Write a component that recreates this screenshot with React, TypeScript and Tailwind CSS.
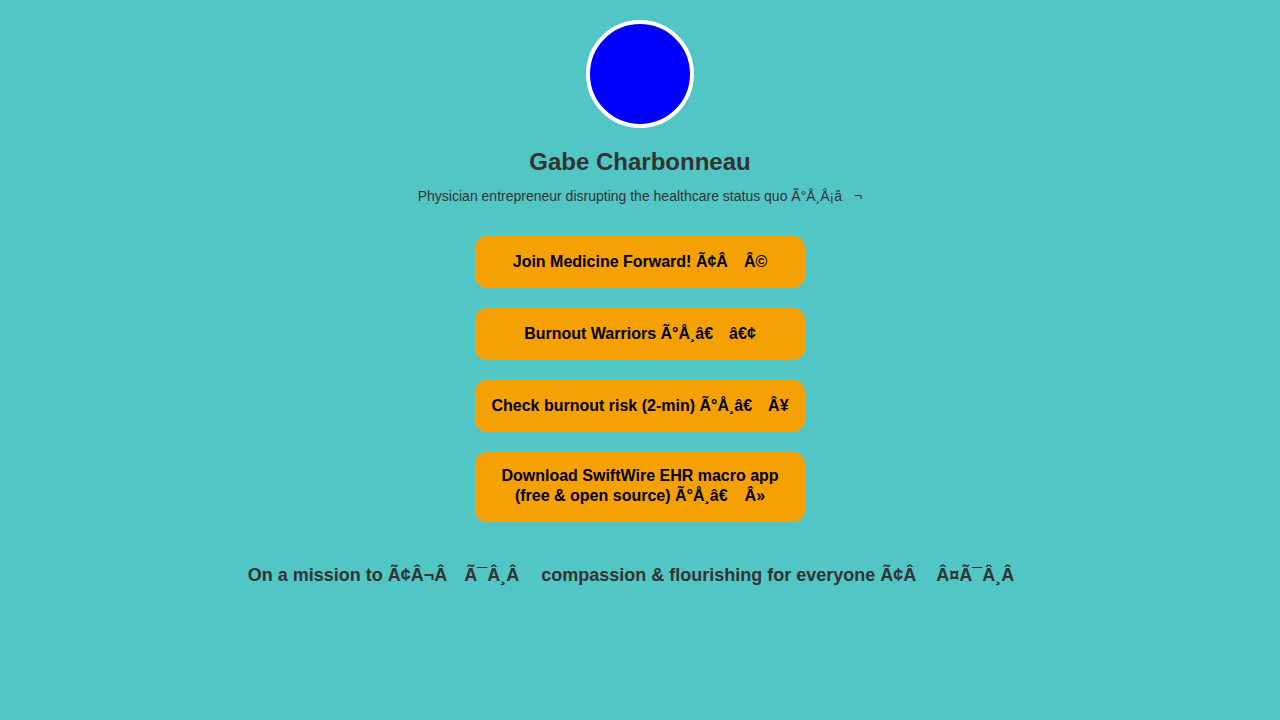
import React from "react";

const G = ({ w }: { w: string }) => <span className={`inline-block ${w}`} />;

const Btn = ({ children, py = "py-[16px]" }: { children: React.ReactNode; py?: string }) => (
  <a
    className={`flex w-[330px] flex-col items-center justify-center rounded-[12px] bg-[#f5a106] px-[8px] ${py} text-center text-[16px] font-bold leading-[20px] text-black whitespace-nowrap`}
  >
    {children}
  </a>
);

export default function App() {
  return (
    <div
      className="flex min-h-[720px] w-full flex-col items-center bg-[#52c6c5] pt-[20px] text-[#333333]"
      style={{ fontFamily: '"Liberation Sans", Arial, sans-serif' }}
    >
      <div className="h-[108px] w-[108px] rounded-full border-4 border-white bg-[#0000ff]" />
      <h1 className="mt-[20px] text-[24px] font-bold leading-[28px]">Gabe Charbonneau</h1>
      <p className="mt-[12px] text-[14px] leading-[16px] whitespace-nowrap">
        Physician entrepreneur disrupting the healthcare status quo Ã°Å¸Å¡â<G w="w-[12px]" />¬
      </p>
      <div className="mt-[32px] flex flex-col items-center gap-[20px]">
        <Btn>
          <span>Join Medicine Forward! Ã¢Â<G w="w-[16px]" />Â©</span>
        </Btn>
        <Btn>
          <span>Burnout Warriors Ã°Å¸â€<G w="w-[16px]" />â€¢</span>
        </Btn>
        <Btn>
          <span>Check burnout risk (2-min) Ã°Å¸â€<G w="w-[16px]" />Â¥</span>
        </Btn>
        <Btn py="pt-[14px] pb-[16px]">
          <span>Download SwiftWire EHR macro app</span>
          <span>(free &amp; open source) Ã°Å¸â€<G w="w-[17px]" />Â»</span>
        </Btn>
      </div>
      <p className="mt-[42px] text-[18px] font-bold leading-[22px] whitespace-nowrap">
        On a mission to Ã¢Â¬Â<G w="w-[17px]" />Ã¯Â¸Â<G w="w-[22px]" />compassion &amp; flourishing for everyone Ã¢Â<G w="w-[20px]" />Â¤Ã¯Â¸Â<G w="w-[18px]" />
      </p>
    </div>
  );
}
